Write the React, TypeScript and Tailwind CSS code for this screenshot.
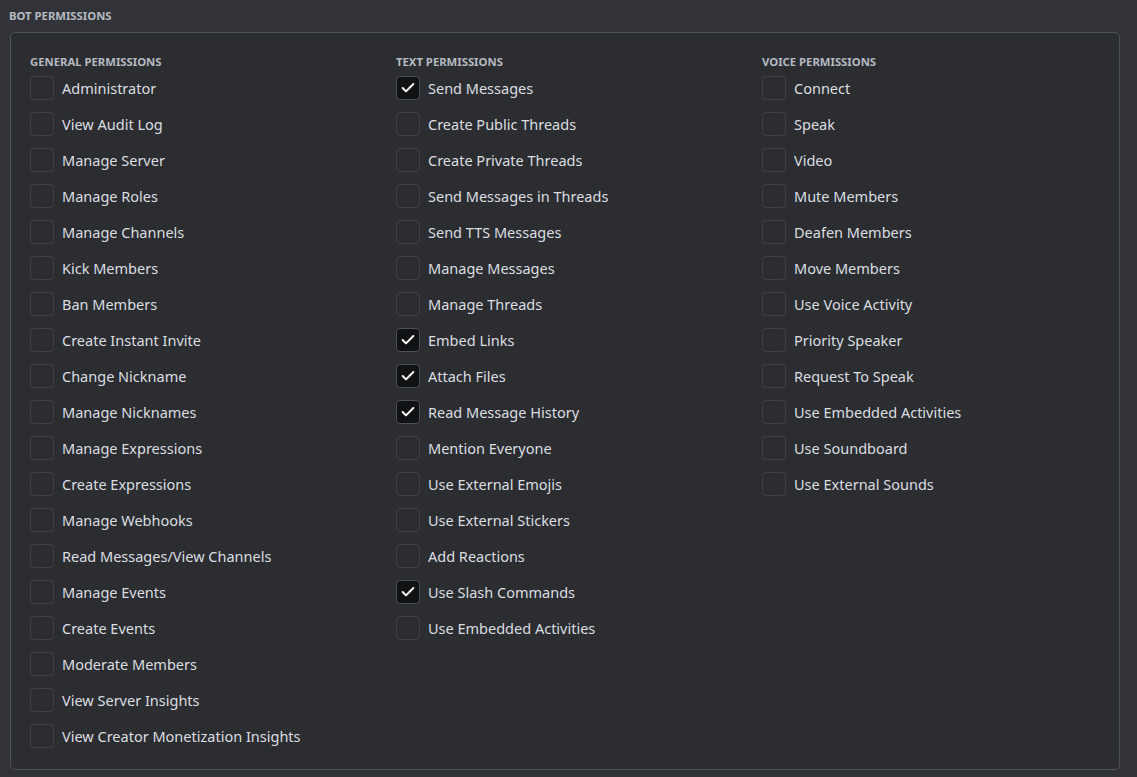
import { Check } from "lucide-react";

const columns = [
  {
    title: "General Permissions",
    items: [
      "Administrator",
      "View Audit Log",
      "Manage Server",
      "Manage Roles",
      "Manage Channels",
      "Kick Members",
      "Ban Members",
      "Create Instant Invite",
      "Change Nickname",
      "Manage Nicknames",
      "Manage Expressions",
      "Create Expressions",
      "Manage Webhooks",
      "Read Messages/View Channels",
      "Manage Events",
      "Create Events",
      "Moderate Members",
      "View Server Insights",
      "View Creator Monetization Insights",
    ],
  },
  {
    title: "Text Permissions",
    items: [
      "Send Messages",
      "Create Public Threads",
      "Create Private Threads",
      "Send Messages in Threads",
      "Send TTS Messages",
      "Manage Messages",
      "Manage Threads",
      "Embed Links",
      "Attach Files",
      "Read Message History",
      "Mention Everyone",
      "Use External Emojis",
      "Use External Stickers",
      "Add Reactions",
      "Use Slash Commands",
      "Use Embedded Activities",
    ],
  },
  {
    title: "Voice Permissions",
    items: [
      "Connect",
      "Speak",
      "Video",
      "Mute Members",
      "Deafen Members",
      "Move Members",
      "Use Voice Activity",
      "Priority Speaker",
      "Request To Speak",
      "Use Embedded Activities",
      "Use Soundboard",
      "Use External Sounds",
    ],
  },
];

const checked = new Set([
  "Send Messages",
  "Embed Links",
  "Attach Files",
  "Read Message History",
  "Use Slash Commands",
]);

export default function App() {
  return (
    <div className="min-h-screen bg-[#313338] px-[9px] pt-[10px] pb-[8px] font-['Noto_Sans',sans-serif]">
      <h2 className="text-[11.3px] font-bold uppercase text-[#b5bac1] leading-[12px] mb-[10px]">Bot Permissions</h2>
      <div className="ml-px mr-[8px] h-[738px] rounded-[5px] border border-[#4e5058] bg-[#2b2d31] pl-[19px] pt-[23px]">
        <div className="grid grid-cols-[366px_366px_1fr]">
          {columns.map((col) => (
            <div key={col.title}>
              <h3 className="text-[11.3px] font-bold uppercase text-[#b5bac1] leading-[12px] mb-[2px]">{col.title}</h3>
              <div className="flex flex-col">
                {col.items.map((item) => {
                  const on = col.title === "Text Permissions" && checked.has(item);
                  return (
                    <label key={item} className="flex h-[36px] items-center gap-[8px]">
                      <span
                        className={
                          on
                            ? "flex h-[24px] w-[24px] shrink-0 items-center justify-center rounded-[4px] border border-[#4e5058] bg-[#111214]"
                            : "flex h-[24px] w-[24px] shrink-0 items-center justify-center rounded-[4px] border border-[#3f4147] bg-[#2b2d31]"
                        }
                      >
                        {on && <Check className="h-[16px] w-[16px] text-white" strokeWidth={3} />}
                      </span>
                      <span className="text-[14.5px] text-[#dbdee1] leading-[20px]">{item}</span>
                    </label>
                  );
                })}
              </div>
            </div>
          ))}
        </div>
      </div>
    </div>
  );
}
